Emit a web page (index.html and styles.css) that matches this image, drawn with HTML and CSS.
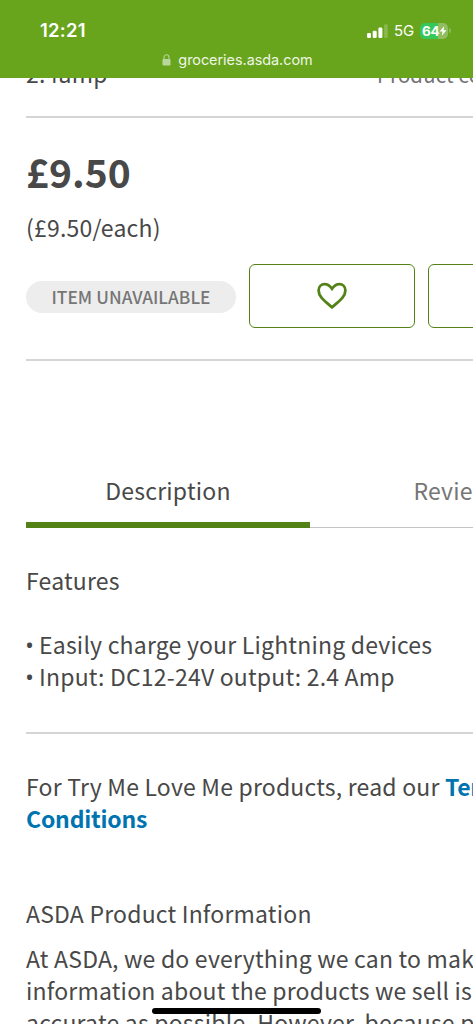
FILE: index.html
```html
<!DOCTYPE html>
<html lang="en">
<head>
<meta charset="utf-8">
<title>ASDA Groceries</title>
<link rel="stylesheet" href="styles.css">
</head>
<body>
<header class="browser-bar">
  <div class="status">
    <span class="time">12:21</span>
    <div class="status-right">
      <svg class="signal" width="21" height="14" viewBox="0 0 21 14" fill="#fff"><rect x="0" y="9" width="4" height="5" rx="1.2"/><rect x="5.7" y="6.8" width="4" height="7.2" rx="1.2"/><rect x="11.4" y="3.5" width="4" height="10.5" rx="1.2"/><rect x="17.1" y="0.3" width="3.6" height="13.7" rx="1.2" opacity=".22"/></svg>
      <span class="network">5G</span>
      <div class="battery"><span class="charge">64</span><svg class="bolt" width="8" height="10" viewBox="0 0 8 10"><path d="M5.3 0.2 0.5 5.6h3L2.8 9.8 7.5 4.3H4.6z" fill="#fff"/></svg></div>
      <span class="battery-cap"></span>
    </div>
  </div>
  <div class="address">
    <svg class="lock" width="9" height="12" viewBox="0 0 9 12"><path d="M2 6V3.5a2.5 2.8 0 0 1 5 0V6" fill="none" stroke="#b9d69b" stroke-width="1.1"/><rect x=".5" y="5" width="8" height="6.5" rx="1.2" fill="#b9d69b"/></svg>
    <span class="domain">groceries.asda.com</span>
  </div>
</header>
<main class="page">
  <div class="summary-row"><span class="variant">2.4amp</span><span class="code">Product code</span></div>
  <section class="purchase">
    <div class="price">£9.50</div>
    <div class="unit-price">(£9.50/each)</div>
    <div class="actions">
      <span class="unavailable">ITEM UNAVAILABLE</span>
      <button class="action" aria-label="Favourite"><svg width="32" height="28" viewBox="0 0 32 28"><path d="M16 25.3C8.5 18.8 2.6 14.6 2.6 8.4 2.6 4.8 5.2 2.2 8.7 2.2c3.1 0 5.2 1.7 7.3 4.6 2.1-2.9 4.2-4.6 7.3-4.6 3.5 0 6.1 2.6 6.1 6.2 0 6.2-5.9 10.4-13.4 16.9z" fill="none" stroke="#538316" stroke-width="2.8"/></svg></button>
      <button class="action" aria-label="Add to list"></button>
    </div>
  </section>
  <nav class="tabs"><a class="tab active">Description</a><a class="tab reviews">Reviews</a></nav>
  <section class="features">
    <h2 class="heading">Features</h2>
    <p class="item"><span class="bullet">•</span>Easily charge your Lightning devices</p>
    <p class="item"><span class="bullet">•</span>Input: DC12-24V output: 2.4 Amp</p>
  </section>
  <section class="terms">
    <p class="terms-text">For Try Me Love Me products, read our <a class="link">Terms &amp;</a></p>
    <p class="terms-text"><a class="link">Conditions</a></p>
  </section>
  <section class="info">
    <h2 class="heading info-heading">ASDA Product Information</h2>
    <p>At ASDA, we do everything we can to make sure</p>
    <p>information about the products we sell is as</p>
    <p>accurate as possible. However, because products</p>
  </section>
</main>
<div class="home-indicator"></div>
</body>
</html>
```
FILE: styles.css
```css
* { box-sizing: border-box; margin: 0; padding: 0; }
html, body { height: 1024px; overflow: hidden; }
body {
  width: 473px;
  background: #fff;
  color: #484848;
  font: 400 23px/32px "Noto Sans CJK SC", "Noto Sans", sans-serif;
  letter-spacing: .2px;
  white-space: nowrap;
}
.browser-bar {
  position: absolute;
  z-index: 2;
  inset: 0 0 auto 0;
  height: 78px;
  background: #68a51c;
  color: #fff;
  font-family: Inter, "Liberation Sans", sans-serif;
  letter-spacing: 0;
}
.status { display: flex; justify-content: space-between; padding: 18px 22px 0 40px; height: 48px; }
.time { font-size: 18.5px; font-weight: 600; line-height: 25px; letter-spacing: .25px; }
.status-right { display: flex; align-items: center; height: 25px; }
.network { margin-left: 6px; width: 21px; font-size: 15px; line-height: 24px; }
.battery {
  display: flex;
  align-items: center;
  margin-left: 5px;
  width: 28px;
  height: 16px;
  border-radius: 5px;
  background: linear-gradient(90deg, #35c759 0 65%, #91bd61 65%);
}
.charge { padding-left: 2px; font-size: 13.5px; font-weight: 700; line-height: 16px; letter-spacing: -.3px; }
.bolt { flex: none; }
.battery-cap { width: 2px; height: 5px; margin-left: 1px; border-radius: 0 2px 2px 0; background: #8dbb59; }
.address { display: flex; align-items: center; justify-content: center; gap: 7px; height: 24px; padding-left: 2px; }
.domain { font-size: 14.4px; line-height: 24px; color: #edf5e5; letter-spacing: -.02px; }
.page { width: 473px; padding: 57px 0 0 26px; overflow: hidden; height: 1024px; }
.summary-row { display: flex; height: 61px; border-bottom: 2px solid #d5d5d5; }
.variant { flex: none; width: 351px; }
.code { padding-top: 1px; color: #737373; font-size: 20.3px; }
.purchase { height: 243px; border-bottom: 2px solid #d5d5d5; }
.price { padding-top: 27px; height: 82px; font-size: 39px; font-weight: 700; line-height: 52px; letter-spacing: 0; }
.unit-price { padding-top: 11px; height: 43px; }
.actions { display: flex; align-items: center; gap: 13px; margin-top: 21px; height: 64px; }
.unavailable {
  flex: none;
  width: 210px;
  height: 32px;
  margin-top: 1px;
  border-radius: 16px;
  background: #ededed;
  color: #767676;
  font-size: 17.3px;
  font-weight: 500;
  line-height: 32px;
  letter-spacing: .05px;
  text-align: center;
}
.action {
  flex: none;
  display: flex;
  align-items: center;
  justify-content: center;
  width: 166px;
  height: 64px;
  border: 1.5px solid #538316;
  border-radius: 6px;
  background: #fff;
}
.tabs { display: flex; margin-top: 112px; height: 55px; }
.tab { flex: none; width: 284px; height: 55px; padding-top: 1px; border-bottom: 1px solid #c5c5c5; color: #767676; text-align: center; }
.tab.active { color: #484848; border-bottom: 6px solid #538316; }
.tab.reviews { padding-left: 12px; }
.features { height: 206px; padding-top: 36px; border-bottom: 2px solid #d5d5d5; }
.heading { font-size: 23px; font-weight: 400; }
.features .heading { margin-bottom: 32px; }
.item { display: flex; }
.bullet { width: 13px; font-family: "Open Sans", "Noto Sans", sans-serif; font-size: 24px; line-height: 34px; height: 32px; margin-left: -1px; margin-right: 1px; }
.terms { padding-top: 36px; }
.link { color: #0073b1; font-weight: 700; letter-spacing: -.2px; }
.info { padding-top: 63px; }
.info-heading { margin-bottom: 13px; }
.home-indicator {
  position: absolute;
  z-index: 3;
  left: 152px;
  top: 1008px;
  width: 169px;
  height: 6px;
  border-radius: 3px;
  background: #000;
}
```
